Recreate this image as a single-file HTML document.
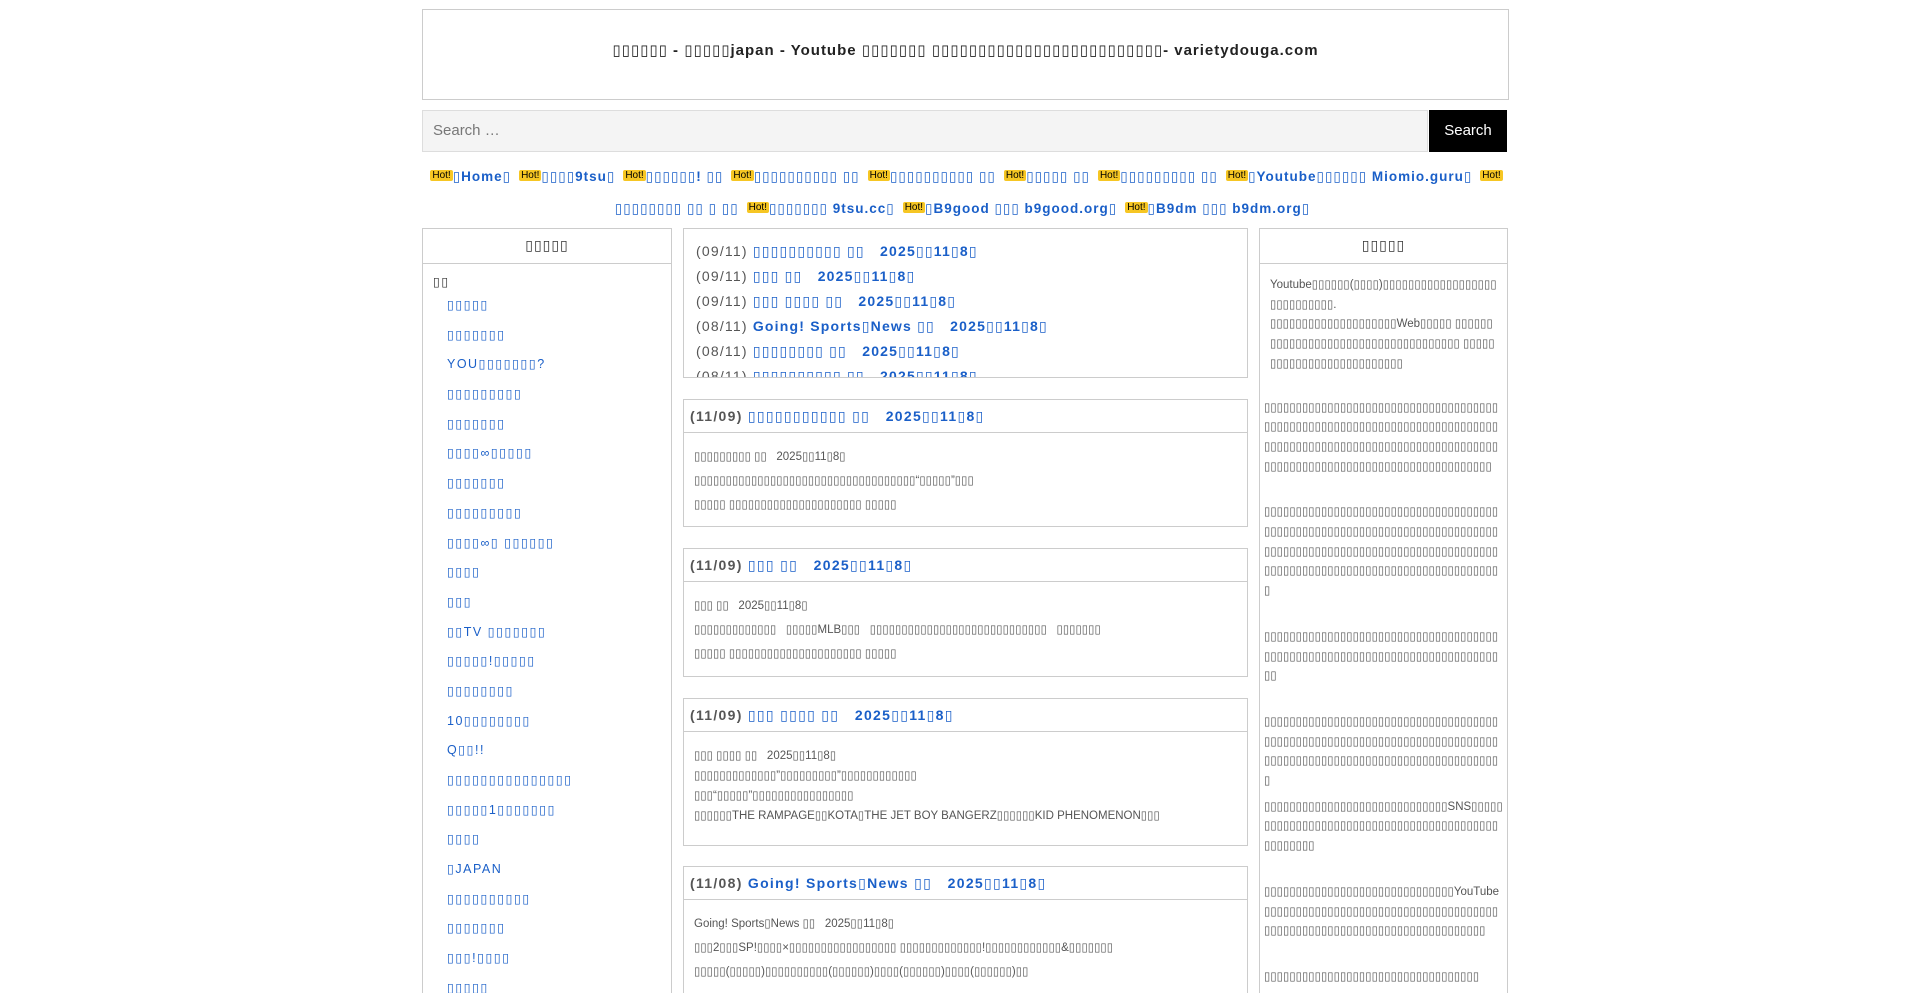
<!DOCTYPE html>
<html style="height:993px;overflow:hidden"><head><meta charset="utf-8"><style>
html,body{height:993px;overflow:hidden}
body{margin:0;background:#fff;font-family:"Liberation Sans","DejaVu Sans",sans-serif;color:#555;width:1920px;position:relative}
.w{position:absolute;left:422px;width:1085px}
a{color:#1a5fc8;text-decoration:none}
.hdr{top:9px;height:89px;border:1px solid #ccc;text-align:center;font-weight:bold;font-size:15px;color:#222;line-height:82px;letter-spacing:1px}
.srch{top:110px;height:42px}
.srch .in{position:absolute;left:0;top:0;width:1006px;border:1px solid #ddd;background:#f4f4f4;color:#777;font-size:15px;line-height:40px;padding-left:10px;box-sizing:border-box;height:42px}
.srch .bt{position:absolute;right:0;top:0;width:78px;height:42px;background:#000;color:#fff;font-size:15px;text-align:center;line-height:42px}
.nav{top:162px;text-align:center;font-size:13.5px;font-weight:bold;letter-spacing:1px;line-height:30px}
.nav a{margin:0 4px}
.hot{background:#f6c623;color:#000;font-size:10px;font-weight:normal;letter-spacing:0;padding:0 2px;border-radius:2px;position:relative;top:-3px}
.col{position:absolute;top:228px;border:1px solid #ccc;box-sizing:border-box;word-break:break-all;overflow:hidden}
.ch{height:34px;border-bottom:1px solid #ccc;text-align:center;font-weight:bold;font-size:14px;line-height:32px;color:#333;letter-spacing:1px}
.li{font-size:12.5px;letter-spacing:1.5px;height:29.7px;line-height:30px;padding-left:24px}
.tk{font-size:14px;line-height:25px;padding:10px 12px;letter-spacing:1.2px;color:#555}
.tk a{font-weight:bold}
.post{position:absolute;left:683px;width:565px;border:1px solid #ccc;box-sizing:border-box}
.ph{height:32px;border-bottom:1px solid #ccc;line-height:32px;padding-left:6px;font-size:14px;font-weight:bold;letter-spacing:1.3px;color:#555}
.pb{padding:12px 10px;font-size:11.5px;line-height:24px;color:#555}
.rt{font-size:11.5px;line-height:19.7px;color:#555;padding:0 4px;word-break:break-all}
</style></head><body>
<div class="w hdr">▯▯▯▯▯▯ - ▯▯▯▯▯japan - Youtube ▯▯▯▯▯▯▯ ▯▯▯▯▯▯▯▯▯▯▯▯▯▯▯▯▯▯▯▯▯▯▯▯▯- varietydouga.com</div>
<div class="w srch"><div class="in">Search …</div><div class="bt">Search</div></div>
<div class="w nav">
<a><span class="hot">Hot!</span>▯Home▯</a><a><span class="hot">Hot!</span>▯▯▯▯9tsu▯</a><a><span class="hot">Hot!</span>▯▯▯▯▯▯! ▯▯</a><a><span class="hot">Hot!</span>▯▯▯▯▯▯▯▯▯▯ ▯▯</a><a><span class="hot">Hot!</span>▯▯▯▯▯▯▯▯▯▯ ▯▯</a><a><span class="hot">Hot!</span>▯▯▯▯▯ ▯▯</a><a><span class="hot">Hot!</span>▯▯▯▯▯▯▯▯▯ ▯▯</a><a><span class="hot">Hot!</span>▯Youtube▯▯▯▯▯▯ Miomio.guru▯</a><a><span class="hot">Hot!</span>▯▯▯▯▯▯▯▯ ▯▯ ▯ ▯▯</a><a><span class="hot">Hot!</span>▯▯▯▯▯▯▯ 9tsu.cc▯</a><a><span class="hot">Hot!</span>▯B9good ▯▯▯ b9good.org▯</a><a><span class="hot">Hot!</span>▯B9dm ▯▯▯ b9dm.org▯</a>
</div>
<div class="col" style="left:422px;width:250px;height:780px">
<div class="ch">▯▯▯▯▯</div>
<div class="li" style="padding-left:10px;color:#333;height:26px;line-height:36px">▯▯</div>
<div class="li"><a>▯▯▯▯▯</a></div><div class="li"><a>▯▯▯▯▯▯▯</a></div><div class="li"><a>YOU▯▯▯▯▯▯▯?</a></div><div class="li"><a>▯▯▯▯▯▯▯▯▯</a></div><div class="li"><a>▯▯▯▯▯▯▯</a></div><div class="li"><a>▯▯▯▯∞▯▯▯▯▯</a></div><div class="li"><a>▯▯▯▯▯▯▯</a></div><div class="li"><a>▯▯▯▯▯▯▯▯▯</a></div><div class="li"><a>▯▯▯▯∞▯ ▯▯▯▯▯▯</a></div><div class="li"><a>▯▯▯▯</a></div><div class="li"><a>▯▯▯</a></div><div class="li"><a>▯▯TV ▯▯▯▯▯▯▯</a></div><div class="li"><a>▯▯▯▯▯!▯▯▯▯▯</a></div><div class="li"><a>▯▯▯▯▯▯▯▯</a></div><div class="li"><a>10▯▯▯▯▯▯▯▯</a></div><div class="li"><a>Q▯▯!!</a></div><div class="li"><a>▯▯▯▯▯▯▯▯▯▯▯▯▯▯▯</a></div><div class="li"><a>▯▯▯▯▯1▯▯▯▯▯▯▯</a></div><div class="li"><a>▯▯▯▯</a></div><div class="li"><a>▯JAPAN</a></div><div class="li"><a>▯▯▯▯▯▯▯▯▯▯</a></div><div class="li"><a>▯▯▯▯▯▯▯</a></div><div class="li"><a>▯▯▯!▯▯▯▯</a></div><div class="li"><a>▯▯▯▯▯</a></div>
</div>
<div class="col" style="left:683px;width:565px;height:150px">
<div class="tk">(09/11) <a>▯▯▯▯▯▯▯▯▯▯ ▯▯ &nbsp; 2025▯▯11▯8▯</a><br>(09/11) <a>▯▯▯ ▯▯ &nbsp; 2025▯▯11▯8▯</a><br>(09/11) <a>▯▯▯ ▯▯▯▯ ▯▯ &nbsp; 2025▯▯11▯8▯</a><br>(08/11) <a>Going! Sports▯News ▯▯ &nbsp; 2025▯▯11▯8▯</a><br>(08/11) <a>▯▯▯▯▯▯▯▯ ▯▯ &nbsp; 2025▯▯11▯8▯</a><br>(08/11) <a>▯▯▯▯▯▯▯▯▯▯ ▯▯ &nbsp; 2025▯▯11▯8▯</a></div>
</div>
<div class="post" style="top:399px;height:128px"><div class="ph">(11/09) <a>▯▯▯▯▯▯▯▯▯▯▯ ▯▯ &nbsp; 2025▯▯11▯8▯</a></div><div class="pb">▯▯▯▯▯▯▯▯▯ ▯▯ &nbsp; 2025▯▯11▯8▯<br>▯▯▯▯▯▯▯▯▯▯▯▯▯▯▯▯▯▯▯▯▯▯▯▯▯▯▯▯▯▯▯▯▯▯▯“▯▯▯▯▯”▯▯▯<br>▯▯▯▯▯ ▯▯▯▯▯▯▯▯▯▯▯▯▯▯▯▯▯▯▯▯▯ ▯▯▯▯▯</div></div>
<div class="post" style="top:548px;height:129px"><div class="ph">(11/09) <a>▯▯▯ ▯▯ &nbsp; 2025▯▯11▯8▯</a></div><div class="pb">▯▯▯ ▯▯ &nbsp; 2025▯▯11▯8▯<br>▯▯▯▯▯▯▯▯▯▯▯▯▯ &nbsp; ▯▯▯▯▯MLB▯▯▯ &nbsp; ▯▯▯▯▯▯▯▯▯▯▯▯▯▯▯▯▯▯▯▯▯▯▯▯▯▯▯▯ &nbsp; ▯▯▯▯▯▯▯<br>▯▯▯▯▯ ▯▯▯▯▯▯▯▯▯▯▯▯▯▯▯▯▯▯▯▯▯ ▯▯▯▯▯</div></div>
<div class="post" style="top:698px;height:148px"><div class="ph">(11/09) <a>▯▯▯ ▯▯▯▯ ▯▯ &nbsp; 2025▯▯11▯8▯</a></div><div class="pb" style="line-height:20px;padding-top:14px">▯▯▯ ▯▯▯▯ ▯▯ &nbsp; 2025▯▯11▯8▯<br>▯▯▯▯▯▯▯▯▯▯▯▯▯”▯▯▯▯▯▯▯▯▯”▯▯▯▯▯▯▯▯▯▯▯▯<br>▯▯▯“▯▯▯▯▯”▯▯▯▯▯▯▯▯▯▯▯▯▯▯▯▯<br>▯▯▯▯▯▯THE RAMPAGE▯▯KOTA▯THE JET BOY BANGERZ▯▯▯▯▯▯KID PHENOMENON▯▯▯</div></div>
<div class="post" style="top:866px;height:130px"><div class="ph">(11/08) <a>Going! Sports▯News ▯▯ &nbsp; 2025▯▯11▯8▯</a></div><div class="pb">Going! Sports▯News ▯▯ &nbsp; 2025▯▯11▯8▯<br>▯▯▯2▯▯▯SP!▯▯▯▯×▯▯▯▯▯▯▯▯▯▯▯▯▯▯▯▯▯ ▯▯▯▯▯▯▯▯▯▯▯▯▯!▯▯▯▯▯▯▯▯▯▯▯▯&amp;▯▯▯▯▯▯▯<br>▯▯▯▯▯(▯▯▯▯▯)▯▯▯▯▯▯▯▯▯▯(▯▯▯▯▯▯)▯▯▯▯(▯▯▯▯▯▯)▯▯▯▯(▯▯▯▯▯▯)▯▯</div></div>
<div class="col" style="left:1259px;width:249px;height:780px">
<div class="ch">▯▯▯▯▯</div>
<div class="rt" style="padding:12px 10px 0">Youtube▯▯▯▯▯▯(▯▯▯▯)▯▯▯▯▯▯▯▯▯▯▯▯▯▯▯▯▯▯▯▯▯▯▯▯▯▯▯▯.<br>▯▯▯▯▯▯▯▯▯▯▯▯▯▯▯▯▯▯▯▯Web▯▯▯▯▯ ▯▯▯▯▯▯▯▯▯▯▯▯▯▯▯▯▯▯▯▯▯▯▯▯▯▯▯▯▯▯▯▯▯▯▯▯ ▯▯▯▯▯▯▯▯▯▯▯▯▯▯▯▯▯▯▯▯▯▯▯▯▯▯</div>
<div class="rt" style="margin-top:24px">▯▯▯▯▯▯▯▯▯▯▯▯▯▯▯▯▯▯▯▯▯▯▯▯▯▯▯▯▯▯▯▯▯▯▯▯▯▯▯▯▯▯▯▯▯▯▯▯▯▯▯▯▯▯▯▯▯▯▯▯▯▯▯▯▯▯▯▯▯▯▯▯▯▯▯▯▯▯▯▯▯▯▯▯▯▯▯▯▯▯▯▯▯▯▯▯▯▯▯▯▯▯▯▯▯▯▯▯▯▯▯▯▯▯▯▯▯▯▯▯▯▯▯▯▯▯▯▯▯▯▯▯▯▯▯▯▯▯▯▯▯▯▯▯▯▯▯</div>
<div class="rt" style="margin-top:26px">▯▯▯▯▯▯▯▯▯▯▯▯▯▯▯▯▯▯▯▯▯▯▯▯▯▯▯▯▯▯▯▯▯▯▯▯▯▯▯▯▯▯▯▯▯▯▯▯▯▯▯▯▯▯▯▯▯▯▯▯▯▯▯▯▯▯▯▯▯▯▯▯▯▯▯▯▯▯▯▯▯▯▯▯▯▯▯▯▯▯▯▯▯▯▯▯▯▯▯▯▯▯▯▯▯▯▯▯▯▯▯▯▯▯▯▯▯▯▯▯▯▯▯▯▯▯▯▯▯▯▯▯▯▯▯▯▯▯▯▯▯▯▯▯▯▯▯▯▯</div>
<div class="rt" style="margin-top:26px">▯▯▯▯▯▯▯▯▯▯▯▯▯▯▯▯▯▯▯▯▯▯▯▯▯▯▯▯▯▯▯▯▯▯▯▯▯▯▯▯▯▯▯▯▯▯▯▯▯▯▯▯▯▯▯▯▯▯▯▯▯▯▯▯▯▯▯▯▯▯▯▯▯▯▯▯</div>
<div class="rt" style="margin-top:26px">▯▯▯▯▯▯▯▯▯▯▯▯▯▯▯▯▯▯▯▯▯▯▯▯▯▯▯▯▯▯▯▯▯▯▯▯▯▯▯▯▯▯▯▯▯▯▯▯▯▯▯▯▯▯▯▯▯▯▯▯▯▯▯▯▯▯▯▯▯▯▯▯▯▯▯▯▯▯▯▯▯▯▯▯▯▯▯▯▯▯▯▯▯▯▯▯▯▯▯▯▯▯▯▯▯▯▯▯▯▯▯▯</div>
<div class="rt" style="margin-top:6px">▯▯▯▯▯▯▯▯▯▯▯▯▯▯▯▯▯▯▯▯▯▯▯▯▯▯▯▯▯SNS▯▯▯▯▯▯▯▯▯▯▯▯▯▯▯▯▯▯▯▯▯▯▯▯▯▯▯▯▯▯▯▯▯▯▯▯▯▯▯▯▯▯▯▯▯▯▯▯▯▯</div>
<div class="rt" style="margin-top:26px">▯▯▯▯▯▯▯▯▯▯▯▯▯▯▯▯▯▯▯▯▯▯▯▯▯▯▯▯▯▯YouTube▯▯▯▯▯▯▯▯▯▯▯▯▯▯▯▯▯▯▯▯▯▯▯▯▯▯▯▯▯▯▯▯▯▯▯▯▯▯▯▯▯▯▯▯▯▯▯▯▯▯▯▯▯▯▯▯▯▯▯▯▯▯▯▯▯▯▯▯▯▯▯▯</div>
<div class="rt" style="margin-top:26px">▯▯▯▯▯▯▯▯▯▯▯▯▯▯▯▯▯▯▯▯▯▯▯▯▯▯▯▯▯▯▯▯▯▯</div>
</div>
</body></html>
